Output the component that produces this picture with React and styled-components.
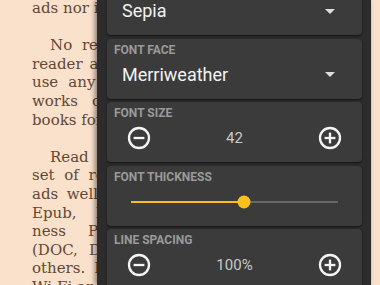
import styled, { createGlobalStyle } from "styled-components";

const GlobalStyle = createGlobalStyle`
  html, body {
    margin: 0;
    padding: 0;
    overflow: hidden;
    background: #f9e1cb;
  }
`;

const Screen = styled.div`
  position: relative;
  width: 380px;
  height: 285px;
  overflow: hidden;
  background: #f9e1cb;
`;

const Page = styled.article`
  width: 248px;
  padding: 0 32px;
  margin-top: -1px;
  font-family: "DejaVu Serif", "Liberation Serif", serif;
  font-size: 15px;
  line-height: 18.6px;
  color: #634834;
`;

const Paragraph = styled.p`
  margin: 0 0 18.6px;
`;

const Line = styled.span`
  display: block;
  white-space: nowrap;
  text-align: justify;
  text-align-last: ${(p) => (p.$last ? "left" : "justify")};
  text-indent: ${(p) => (p.$indent ? "18px" : "0")};
`;

const Drawer = styled.aside`
  position: absolute;
  top: 0;
  bottom: 0;
  left: 97px;
  width: 274px;
  background: #2c2c2c;
  box-shadow: -2px 0 5px rgba(0, 0, 0, 0.45);
`;

const Cards = styled.div`
  display: flex;
  flex-direction: column;
  gap: 3.5px;
  margin-top: -25px;
  padding: 0 9px 0 10px;
`;

const Card = styled.section`
  height: 60px;
  box-sizing: border-box;
  padding-top: 4px;
  background: #3b3b3b;
  border-radius: 4px;
  box-shadow: 0 1px 2px rgba(0, 0, 0, 0.55);
  font-family: Roboto, "Noto Sans", sans-serif;
`;

const Label = styled.div`
  padding-left: 7px;
  font-size: 12px;
  font-weight: 700;
  line-height: 14px;
  color: #9a9a9a;
`;

const Row = styled.div`
  display: flex;
  align-items: center;
  justify-content: space-between;
  height: 24px;
  margin-top: 6px;
  padding: ${(p) => p.$pad || "0"};
`;

const SelectValue = styled.span`
  font-size: 18px;
  line-height: 24px;
  color: #f2f2f2;
`;

const Caret = styled.span`
  width: 0;
  height: 0;
  border-left: 5px solid transparent;
  border-right: 5px solid transparent;
  border-top: 5px solid #dedede;
`;

const StepValue = styled.span`
  font-size: 15px;
  color: #c9c9c9;
`;

const IconButton = styled.button`
  display: flex;
  width: 24px;
  height: 24px;
  padding: 0;
  border: none;
  background: none;
  color: #f5f5f5;
`;

const Track = styled.div`
  position: relative;
  flex: 1;
  height: 2px;
  background: #676767;
`;

const Fill = styled.div`
  height: 100%;
  background: #f6bf1c;
`;

const Thumb = styled.div`
  position: absolute;
  top: 50%;
  width: 13px;
  height: 13px;
  border-radius: 50%;
  background: #f9c21a;
  transform: translate(-50%, -50%);
`;

function StepIcon({ plus }) {
  return (
    <svg width="24" height="24" viewBox="0 0 24 24" fill="none" stroke="currentColor" strokeWidth="2.3">
      <circle cx="12" cy="12" r="10" />
      <line x1="6.6" y1="12" x2="17.4" y2="12" />
      {plus && <line x1="12" y1="6.6" x2="12" y2="17.4" />}
    </svg>
  );
}

function Select({ label, value }) {
  return (
    <Card>
      <Label>{label}</Label>
      <Row $pad="0 27px 0 15px">
        <SelectValue>{value}</SelectValue>
        <Caret />
      </Row>
    </Card>
  );
}

function Stepper({ label, value }) {
  return (
    <Card>
      <Label>{label}</Label>
      <Row $pad="0 20px">
        <IconButton>
          <StepIcon />
        </IconButton>
        <StepValue>{value}</StepValue>
        <IconButton>
          <StepIcon plus />
        </IconButton>
      </Row>
    </Card>
  );
}

function Slider({ label, value }) {
  const pct = `${value * 100}%`;
  return (
    <Card>
      <Label>{label}</Label>
      <Row $pad="0 24px">
        <Track>
          <Fill style={{ width: pct }} />
          <Thumb style={{ left: pct }} />
        </Track>
      </Row>
    </Card>
  );
}

export default function App() {
  return (
    <Screen>
      <GlobalStyle />
      <Page>
        <Paragraph>
          <Line $last>ads nor in-app purchases.</Line>
        </Paragraph>
        <Paragraph>
          <Line $indent>No registration needed: this</Line>
          <Line>reader app does not ask you to</Line>
          <Line>use any account. Read classic</Line>
          <Line>works of literature and free</Line>
          <Line $last>books for all ages.</Line>
        </Paragraph>
        <Paragraph>
          <Line $indent>Read books in a wide range</Line>
          <Line>set of readable formats: it re-</Line>
          <Line>ads well FB2, TXT and HTML,</Line>
          <Line>Epub, Kindle (MOBI), busi-</Line>
          <Line>ness PDF, Microsoft Word</Line>
          <Line>(DOC, DOCX), RTF and many</Line>
          <Line>others. Files from your phone,</Line>
          <Line $last>Wi-Fi and cloud storage.</Line>
        </Paragraph>
      </Page>
      <Drawer>
        <Cards>
          <Select label="COLOR THEME" value="Sepia" />
          <Select label="FONT FACE" value="Merriweather" />
          <Stepper label="FONT SIZE" value="42" />
          <Slider label="FONT THICKNESS" value={0.546} />
          <Stepper label="LINE SPACING" value="100%" />
        </Cards>
      </Drawer>
    </Screen>
  );
}
